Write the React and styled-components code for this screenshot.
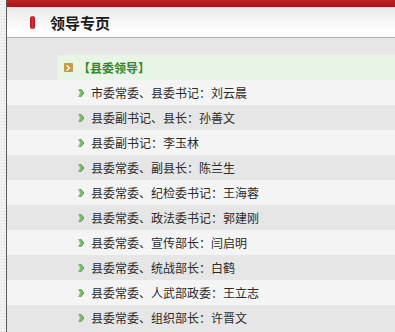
import styled, { createGlobalStyle } from "styled-components";

const GlobalStyle = createGlobalStyle`
  html, body {
    margin: 0;
    padding: 0;
    background: #ffffff;
  }
  body {
    font-family: "SimSun", "Noto Sans CJK SC", "DejaVu Sans", sans-serif;
  }
`;

const Page = styled.div`
  display: flex;
  width: 395px;
  height: 332px;
  overflow: hidden;
`;

const Rail = styled.div`
  width: 6px;
  flex: none;
  background-color: #f2f2f2;
  background-image: radial-gradient(#d6d6d6 0.8px, transparent 0.9px);
  background-size: 3px 3px;
  border-right: 1px solid #5a5a5a;
`;

const Main = styled.div`
  flex: 1;
  display: flex;
  flex-direction: column;
  background: #e6e6e6;
`;

const TopBar = styled.div`
  height: 7px;
  background: linear-gradient(#c41e22, #a8141a);
`;

const Header = styled.div`
  height: 30px;
  display: flex;
  align-items: center;
  gap: 15px;
  padding-left: 23px;
  background: linear-gradient(#e9e9e9, #ffffff 80%);
  border-bottom: 1px solid #b4b4b4;
`;

const Pill = styled.span`
  width: 5px;
  height: 13px;
  border-radius: 3px;
  background: linear-gradient(90deg, #a51418, #d8343a 50%, #a51418);
`;

const Title = styled.h2`
  margin: 0;
  font-size: 15px;
  font-weight: bold;
  color: #1a1a1a;
`;

const Spacer = styled.div`
  height: 17px;
`;

const Category = styled.div`
  margin-left: 50px;
  height: 25px;
  display: flex;
  align-items: center;
  gap: 5px;
  padding-left: 7px;
  background: #e8f5e5;
`;

const CategoryIcon = styled.span`
  width: 9px;
  height: 9px;
  display: flex;
  align-items: center;
  justify-content: center;
  background: #c99a46;
  border-radius: 1px;
`;

const CategoryText = styled.span`
  font-size: 12px;
  font-weight: bold;
  color: #2f8a2a;
`;

const List = styled.ul`
  margin: 0;
  padding: 0;
  list-style: none;
`;

const Row = styled.li`
  height: 25px;
  display: flex;
  align-items: center;
  gap: 7px;
  padding-left: 71px;
  font-size: 12px;
  color: #2b2b2b;
  background: ${(p) => (p.$odd ? "#e6e6e6" : "#f4f4f4")};
`;

const Arrow = () => (
  <svg width="6" height="8" viewBox="0 0 6 8">
    <path d="M0 0h2.5l3.5 4-3.5 4H0l2-4z" fill="#7dbd6e" />
    <path d="M2.5 0l3.5 4-3.5 4" stroke="#4a9a3e" strokeWidth="1" fill="none" />
  </svg>
);

const items = [
  "市委常委、县委书记：刘云晨",
  "县委副书记、县长：孙善文",
  "县委副书记：李玉林",
  "县委常委、副县长：陈兰生",
  "县委常委、纪检委书记：王海蓉",
  "县委常委、政法委书记：郭建刚",
  "县委常委、宣传部长：闫启明",
  "县委常委、统战部长：白鹤",
  "县委常委、人武部政委：王立志",
  "县委常委、组织部长：许晋文",
];

export default function App() {
  return (
    <Page>
      <GlobalStyle />
      <Rail />
      <Main>
        <TopBar />
        <Header>
          <Pill />
          <Title>领导专页</Title>
        </Header>
        <Spacer />
        <Category>
          <CategoryIcon>
            <svg width="5" height="6" viewBox="0 0 5 6">
              <path d="M0.5 0.5l3 2.5-3 2.5" stroke="#fff" strokeWidth="1.4" fill="none" />
            </svg>
          </CategoryIcon>
          <CategoryText>【县委领导】</CategoryText>
        </Category>
        <List>
          {items.map((t, i) => (
            <Row key={t} $odd={i % 2 === 1}>
              <Arrow />
              {t}
            </Row>
          ))}
        </List>
      </Main>
    </Page>
  );
}
